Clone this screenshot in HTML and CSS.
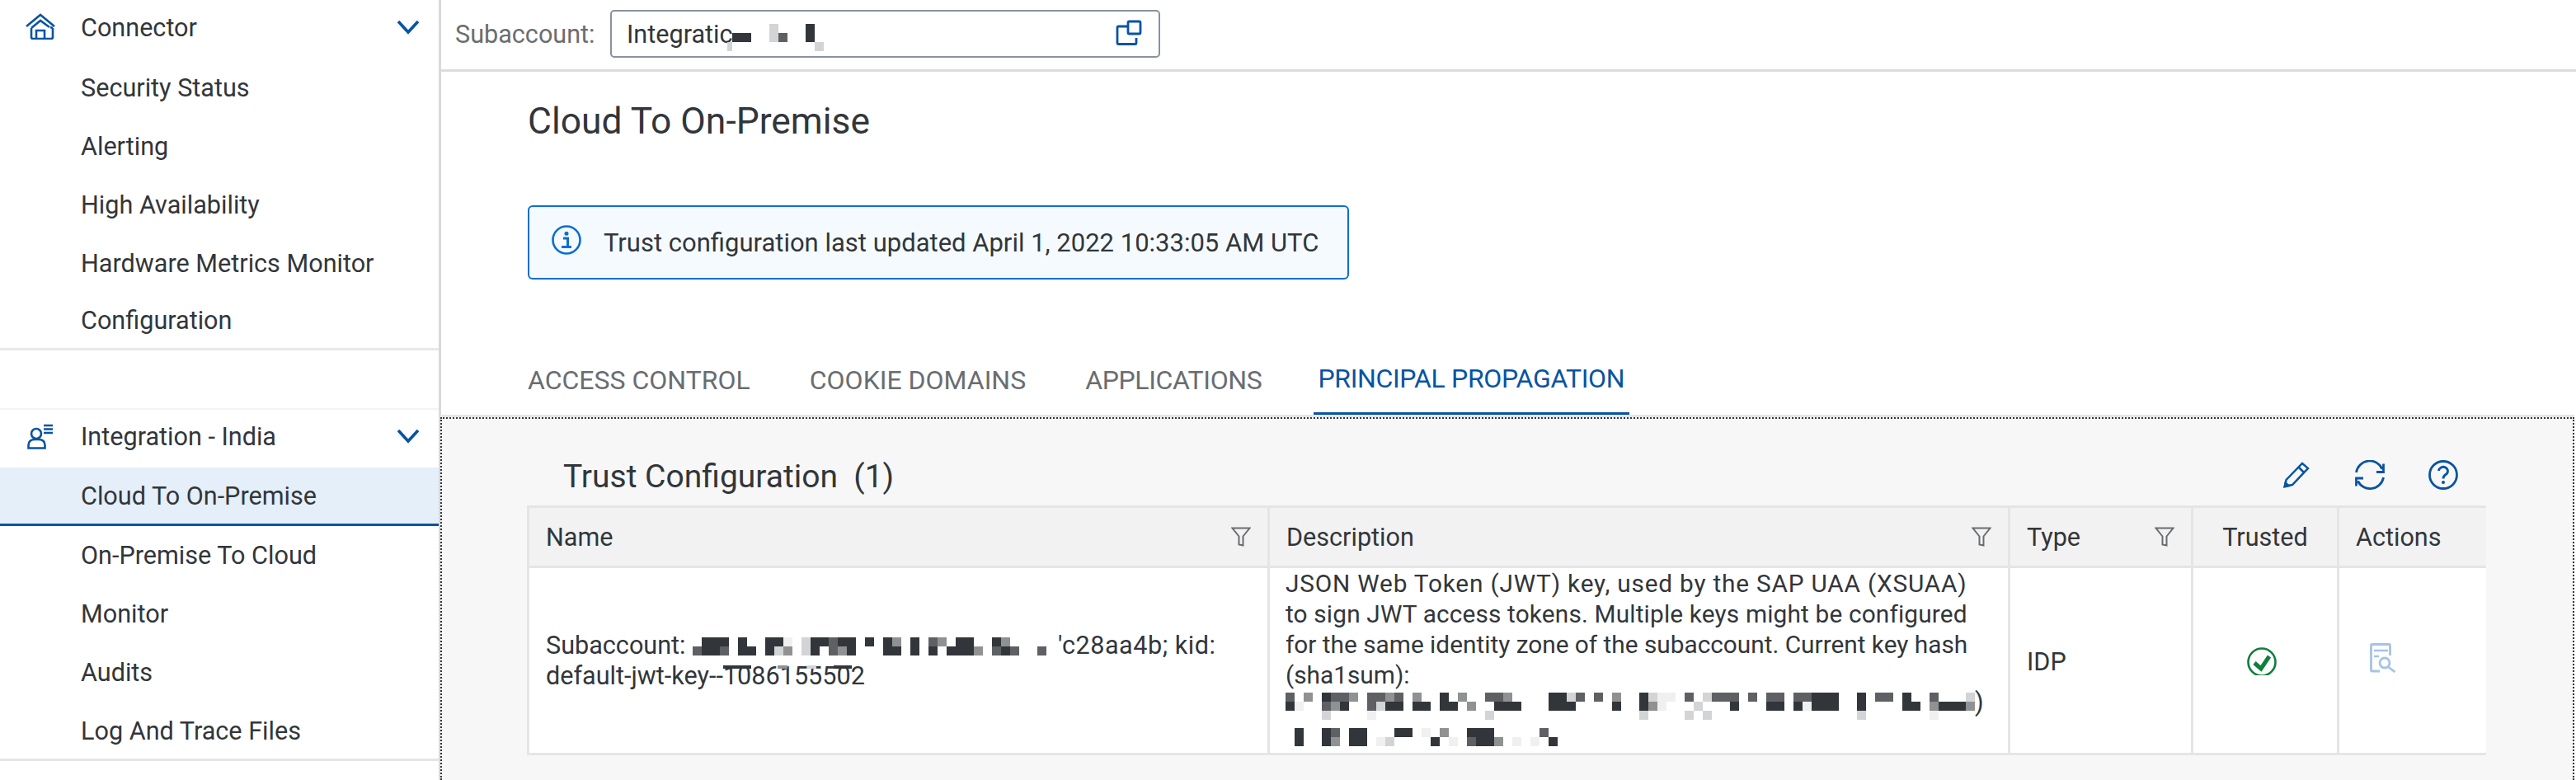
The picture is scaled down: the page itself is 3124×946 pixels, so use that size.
FILE: index.html
```html
<!DOCTYPE html>
<html lang="en">
<head>
<meta charset="utf-8">
<title>Cloud To On-Premise</title>
<link rel="stylesheet" href="styles.css">
</head>
<body>
<div class="app">
  <aside class="sidebar">
    <nav class="nav-group nav-group-first">
      <div class="nav-head">
        <svg class="nav-icon" viewBox="0 0 36 32"><path d="M1 16 18 2l17 14M7 18 18 9l11 8M7 18v11q0 2 2 2h22q2 0 2-2V18M30 17l3 1M13 31V21h10v10" fill="none" stroke="#0854a0" stroke-width="2.6"/></svg>
        <span class="nav-label">Connector</span>
        <svg class="chevron" viewBox="0 0 28 18"><path d="M2 2l12 13L26 2" fill="none" stroke="#0854a0" stroke-width="3.6"/></svg>
      </div>
      <a class="nav-item">Security Status</a>
      <a class="nav-item">Alerting</a>
      <a class="nav-item">High Availability</a>
      <a class="nav-item">Hardware Metrics Monitor</a>
      <a class="nav-item nav-item-last">Configuration</a>
    </nav>
    <nav class="nav-group nav-group-second">
      <div class="nav-head">
        <svg class="nav-icon" viewBox="0 0 36 32"><path d="M3.500 30.500h20V27q0-7-8-7h-4q-8 0-8 7z" fill="none" stroke="#0854a0" stroke-width="2.600"/><circle cx="13" cy="13" r="6" fill="none" stroke="#0854a0" stroke-width="2.600"/><path d="M22 3h11M22 7.500h11M22 12h11" fill="none" stroke="#0854a0" stroke-width="2.500"/></svg>
        <span class="nav-label">Integration - India</span>
        <svg class="chevron" viewBox="0 0 28 18"><path d="M2 2l12 13L26 2" fill="none" stroke="#0854a0" stroke-width="3.6"/></svg>
      </div>
      <a class="nav-item nav-item-selected">Cloud To On-Premise</a>
      <a class="nav-item">On-Premise To Cloud</a>
      <a class="nav-item">Monitor</a>
      <a class="nav-item">Audits</a>
      <a class="nav-item">Log And Trace Files</a>
    </nav>
  </aside>
  <main class="main">
    <header class="topbar">
      <span class="topbar-label">Subaccount:</span>
      <div class="selector">
        <span class="selector-text">Integratic</span>
        <svg class="mosaic-selector" viewBox="0 0 117 33"><rect y="22" width="6" height="11" class="l"/><rect x="6" y="11" width="23" height="11" class="d"/><rect x="51" width="11" height="22" class="l"/><rect x="62" y="11" width="11" height="11" class="m"/><rect x="95" width="11" height="22" class="d"/><rect x="106" y="22" width="11" height="11" class="l"/></svg>
        <svg class="copy-icon" viewBox="0 0 32 32"><path d="M14 8H3.500q-1.500 0-1.500 1.500V28q0 1.500 1.500 1.500h20q1.500 0 1.500-1.500v-6" fill="none" stroke="#0854a0" stroke-width="2.800"/><rect x="15" y="2" width="15" height="15" rx="1.500" fill="none" stroke="#0854a0" stroke-width="2.800"/></svg>
      </div>
    </header>
    <div class="content">
      <h1 class="title">Cloud To On-Premise</h1>
      <div class="strip">
        <svg class="strip-icon" viewBox="0 0 36 36"><circle cx="18" cy="18" r="16.500" fill="none" stroke="#0a6ed1" stroke-width="2.600"/><circle cx="18" cy="10.300" r="2.500" fill="#0a6ed1"/><path d="M14 16h5.500v10M12 26.500h12" fill="none" stroke="#0a6ed1" stroke-width="3"/></svg>
        <span class="strip-text">Trust configuration last updated April 1, 2022 10:33:05 AM UTC</span>
      </div>
      <div class="tabs">
        <span class="tab">ACCESS CONTROL</span>
        <span class="tab">COOKIE DOMAINS</span>
        <span class="tab tab-narrow tab-before-active">APPLICATIONS</span>
        <span class="tab tab-narrow tab-active">PRINCIPAL PROPAGATION</span>
      </div>
    </div>
    <section class="panel">
      <div class="toolbar">
        <h2 class="panel-title">Trust Configuration&nbsp; (1)</h2>
        <div class="tools">
          <svg class="tool tool-pencil" viewBox="0 0 32 32"><path d="M2 29.500 3.500 22 23 2l7 6-19 20zM18.500 6.500l7 7" fill="none" stroke="#0854a0" stroke-width="2.500"/><path d="M0 32l2-9 7 7z" fill="#0854a0"/></svg>
          <svg class="tool tool-refresh" viewBox="0 0 36 36"><path d="M1.500 15A16.500 16.500 0 0 1 33 11M34.500 21A16.500 16.500 0 0 1 3.500 25.500M34.500 4.500V14.500H26M1.500 31.500V22H10" fill="none" stroke="#0854a0" stroke-width="2.800"/></svg>
          <svg class="tool tool-help" viewBox="0 0 36 36"><circle cx="18" cy="18" r="16.500" fill="none" stroke="#0854a0" stroke-width="2.800"/><path d="M12.500 13a5.500 5 0 1 1 8.500 4.500q-3 2-3 5" fill="none" stroke="#0854a0" stroke-width="2.800"/><circle cx="18" cy="27" r="2" fill="#0854a0"/></svg>
        </div>
      </div>
      <div class="table">
        <div class="th">Name<svg class="filter" viewBox="0 0 24 24"><path d="M1.500 1.500h21l-8 10v11l-5-1v-10z" fill="none" stroke="#6a6d70" stroke-width="2"/></svg></div>
        <div class="th">Description<svg class="filter" viewBox="0 0 24 24"><path d="M1.500 1.500h21l-8 10v11l-5-1v-10z" fill="none" stroke="#6a6d70" stroke-width="2"/></svg></div>
        <div class="th">Type<svg class="filter" viewBox="0 0 24 24"><path d="M1.500 1.500h21l-8 10v11l-5-1v-10z" fill="none" stroke="#6a6d70" stroke-width="2"/></svg></div>
        <div class="th th-trusted">Trusted</div>
        <div class="th">Actions</div>

        <div class="td td-name">
          <span>Subaccount: <svg class="mosaic-name" viewBox="0 0 39 2"><rect x="1" width="3" height="1" class="d"/><rect x="5" width="1" height="1" class="d"/><rect x="8" width="2" height="1" class="d"/><rect x="10" width="1" height="1" class="x"/><rect x="12" width="1" height="1" class="l"/><rect x="13" width="2" height="1" class="d"/><rect x="15" width="1" height="1" class="m"/><rect x="16" width="2" height="1" class="d"/><rect x="19" width="1" height="1" class="d"/><rect x="21" width="1" height="1" class="d"/><rect x="22" width="1" height="1" class="g"/><rect x="24" width="1" height="1" class="d"/><rect x="26" width="1" height="1" class="m"/><rect x="27" width="1" height="1" class="g"/><rect x="29" width="2" height="1" class="d"/><rect x="33" width="1" height="1" class="d"/><rect x="34" width="1" height="1" class="g"/><rect y="1" width="1" height="1" class="m"/><rect x="1" y="1" width="2" height="1" class="d"/><rect x="3" y="1" width="1" height="1" class="m"/><rect x="5" y="1" width="2" height="1" class="d"/><rect x="8" y="1" width="1" height="1" class="d"/><rect x="9" y="1" width="1" height="1" class="l"/><rect x="10" y="1" width="1" height="1" class="g"/><rect x="12" y="1" width="1" height="1" class="l"/><rect x="13" y="1" width="1" height="1" class="d"/><rect x="15" y="1" width="1" height="1" class="m"/><rect x="16" y="1" width="1" height="1" class="g"/><rect x="17" y="1" width="1" height="1" class="d"/><rect x="21" y="1" width="2" height="1" class="d"/><rect x="24" y="1" width="1" height="1" class="d"/><rect x="26" y="1" width="1" height="1" class="d"/><rect x="28" y="1" width="3" height="1" class="d"/><rect x="31" y="1" width="1" height="1" class="g"/><rect x="33" y="1" width="1" height="1" class="m"/><rect x="34" y="1" width="1" height="1" class="d"/><rect x="35" y="1" width="1" height="1" class="m"/><rect x="38" y="1" width="1" height="1" class="m"/></svg><span class="name-tail">'c28aa4b; kid:</span><br>default-jwt-key--<span class="digits">1086155502<svg class="digits-marks" viewBox="0 0 160 4"><rect width="34" height="4" class="d"/><rect x="66" width="12" height="4" class="g"/><rect x="102" width="11" height="4" class="l"/><rect x="134" width="22" height="4" class="d"/></svg></span></span>
        </div>
        <div class="td td-desc">
          <p class="desc-text"><span class="desc-line-caps">JSON Web Token (JWT) key, used by the SAP UAA (XSUAA)</span><br><span class="desc-line-two">to sign JWT access tokens. Multiple keys might be configured</span><br>for the same identity zone of the subaccount. Current key hash<br>(sha1sum):</p>
          <div class="hash-line"><svg class="mosaic-hash" viewBox="0 0 76 3"><rect width="1" height="1" class="m"/><rect x="2" width="1" height="1" class="g"/><rect x="4" width="1" height="1" class="d"/><rect x="5" width="2" height="1" class="m"/><rect x="7" width="1" height="1" class="g"/><rect x="9" width="2" height="1" class="m"/><rect x="11" width="1" height="1" class="g"/><rect x="12" width="1" height="1" class="m"/><rect x="14" width="1" height="1" class="g"/><rect x="17" width="1" height="1" class="d"/><rect x="19" width="1" height="1" class="g"/><rect x="22" width="2" height="1" class="m"/><rect x="24" width="1" height="1" class="g"/><rect x="29" width="2" height="1" class="d"/><rect x="31" width="1" height="1" class="l"/><rect x="32" width="1" height="1" class="m"/><rect x="34" width="1" height="1" class="m"/><rect x="36" width="1" height="1" class="g"/><rect x="39" width="1" height="1" class="d"/><rect x="40" width="1" height="1" class="l"/><rect x="41" width="2" height="1" class="x"/><rect x="44" width="1" height="1" class="m"/><rect x="46" width="1" height="1" class="l"/><rect x="47" width="3" height="1" class="m"/><rect x="51" width="1" height="1" class="m"/><rect x="53" width="2" height="1" class="m"/><rect x="56" width="2" height="1" class="m"/><rect x="58" width="3" height="1" class="d"/><rect x="63" width="1" height="1" class="d"/><rect x="65" width="2" height="1" class="m"/><rect x="68" width="1" height="1" class="d"/><rect x="71" width="1" height="1" class="m"/><rect x="75" width="1" height="1" class="l"/><rect y="1" width="1" height="1" class="d"/><rect x="1" y="1" width="1" height="1" class="x"/><rect x="4" y="1" width="1" height="1" class="m"/><rect x="5" y="1" width="1" height="1" class="g"/><rect x="6" y="1" width="1" height="1" class="d"/><rect x="9" y="1" width="1" height="1" class="m"/><rect x="10" y="1" width="1" height="1" class="l"/><rect x="11" y="1" width="2" height="1" class="d"/><rect x="14" y="1" width="2" height="1" class="d"/><rect x="17" y="1" width="2" height="1" class="d"/><rect x="20" y="1" width="1" height="1" class="g"/><rect x="23" y="1" width="3" height="1" class="d"/><rect x="29" y="1" width="3" height="1" class="d"/><rect x="36" y="1" width="1" height="1" class="d"/><rect x="39" y="1" width="1" height="1" class="d"/><rect x="40" y="1" width="1" height="1" class="g"/><rect x="41" y="1" width="1" height="1" class="x"/><rect x="45" y="1" width="1" height="1" class="l"/><rect x="49" y="1" width="1" height="1" class="d"/><rect x="53" y="1" width="2" height="1" class="d"/><rect x="56" y="1" width="1" height="1" class="d"/><rect x="57" y="1" width="1" height="1" class="x"/><rect x="58" y="1" width="3" height="1" class="d"/><rect x="63" y="1" width="1" height="1" class="d"/><rect x="68" y="1" width="2" height="1" class="d"/><rect x="71" y="1" width="1" height="1" class="g"/><rect x="72" y="1" width="3" height="1" class="d"/><rect x="75" y="1" width="1" height="1" class="g"/><rect x="4" y="2" width="1" height="1" class="l"/><rect x="9" y="2" width="1" height="1" class="x"/><rect x="22" y="2" width="1" height="1" class="l"/><rect x="39" y="2" width="1" height="1" class="l"/><rect x="44" y="2" width="1" height="1" class="l"/><rect x="46" y="2" width="1" height="1" class="l"/><rect x="63" y="2" width="1" height="1" class="l"/><rect x="71" y="2" width="1" height="1" class="x"/></svg><span class="hash-paren">)</span></div>
          <svg class="mosaic-hash-two" viewBox="0 0 30 2"><rect x="1" width="1" height="1" class="d"/><rect x="4" width="1" height="1" class="d"/><rect x="5" width="1" height="1" class="m"/><rect x="7" width="2" height="1" class="d"/><rect x="12" width="2" height="1" class="d"/><rect x="15" width="1" height="1" class="x"/><rect x="17" width="1" height="1" class="g"/><rect x="20" width="3" height="1" class="d"/><rect x="28" width="1" height="1" class="m"/><rect x="1" y="1" width="1" height="1" class="d"/><rect x="4" y="1" width="1" height="1" class="d"/><rect x="5" y="1" width="1" height="1" class="g"/><rect x="7" y="1" width="2" height="1" class="d"/><rect x="10" y="1" width="1" height="1" class="x"/><rect x="11" y="1" width="1" height="1" class="l"/><rect x="16" y="1" width="1" height="1" class="d"/><rect x="18" y="1" width="1" height="1" class="x"/><rect x="20" y="1" width="1" height="1" class="m"/><rect x="21" y="1" width="2" height="1" class="d"/><rect x="23" y="1" width="1" height="1" class="g"/><rect x="25" y="1" width="1" height="1" class="x"/><rect x="27" y="1" width="1" height="1" class="x"/><rect x="29" y="1" width="1" height="1" class="d"/></svg>
        </div>
        <div class="td td-type">IDP</div>
        <div class="td td-trusted">
          <svg class="check-icon" viewBox="0 0 36 34"><circle cx="18" cy="18" r="16.500" fill="none" stroke="#107e3e" stroke-width="2.600"/><path d="M9 19l8 7 10-15" fill="none" stroke="#107e3e" stroke-width="5"/></svg>
        </div>
        <div class="td">
          <svg class="action-icon" viewBox="0 0 32 36"><path d="M12 34H3q-1.500 0-1.500-1.500V3q0-1.500 1.500-1.500h20q1.500 0 1.500 1.500v12" fill="none" stroke="#a6c3e4" stroke-width="2.800"/><path d="M5 9h17M5 16h6" fill="none" stroke="#a6c3e4" stroke-width="2.600"/><circle cx="18" cy="24" r="6" fill="none" stroke="#a6c3e4" stroke-width="2.800"/><path d="M22.500 29l8 6" fill="none" stroke="#a6c3e4" stroke-width="2.800"/></svg>
        </div>
      </div>
    </section>
  </main>
</div>
</body>
</html>
```
FILE: styles.css
```css
* { box-sizing: border-box; }
html, body { margin: 0; padding: 0; height: 946px; overflow: hidden; background: #fff; }
body { font-family: "Roboto", "Liberation Sans", sans-serif; font-size: 30.6px; color: #32363a; }
.d { fill: #32363a; } .m { fill: #5e6063; } .g { fill: #8f9193; } .l { fill: #d3d4d5; } .x { fill: #f0f0f0; }

.app { display: flex; height: 946px; }
.sidebar { width: 535px; flex: none; border-right: 3px solid #d9d9d9; overflow: hidden; }
.nav-group { display: flex; flex-direction: column; }
.nav-group-first { height: 425px; border-bottom: 3px solid #e8e8e8; }
.nav-group-second { margin-top: 70px; border-top: 2px solid #f4f4f4; border-bottom: 3px solid #e5e5e5; height: 428px; }
.nav-head { height: 66px; flex: none; display: flex; align-items: center; padding-left: 31px; position: relative; }
.nav-group-first .nav-head { height: 66px; margin-bottom: 5px; }
.nav-group-first .nav-icon { margin-bottom: 2px; }
.nav-group-second .nav-head { height: 70px; padding-bottom: 6px; }
.nav-icon { width: 36px; height: 32px; flex: none; margin-right: 31px; }
.nav-label { flex: 1; }
.chevron { width: 28px; height: 18px; margin-right: 23px; flex: none; }
.nav-item { height: 71px; flex: none; display: flex; align-items: center; padding-left: 98px; }
.nav-group-first .nav-item-last { height: 67px; }
.nav-item-selected { background: #e5eff9; border-bottom: 3px solid #0854a0; padding-bottom: 0; }

.main { flex: 1; min-width: 0; display: flex; flex-direction: column; }
.topbar { height: 87px; flex: none; display: flex; align-items: center; padding: 0 0 2px 17px; border-bottom: 3px solid #dcdcdc; }
.topbar-label { color: #6a6d70; width: 188px; }
.selector { width: 667px; height: 58px; border: 2px solid #89919a; border-radius: 5px; display: flex; align-items: center; padding-left: 18px; position: relative; background: #fff; }
.selector-text { flex: none; width: 122px; white-space: nowrap; }
.mosaic-selector { width: 117px; height: 33px; flex: none; margin-top: 8px; shape-rendering: crispEdges; }
.copy-icon { width: 32px; height: 32px; position: absolute; right: 20px; top: 10px; }

.content { height: 419px; flex: none; padding-left: 105px; display: flex; flex-direction: column; align-items: flex-start; }
.title { font-size: 44.4px; font-weight: 400; line-height: 50px; margin: 35px 0 0; }
.strip { width: 996px; height: 90px; margin-top: 77px; border: 2px solid #0a6ed1; border-radius: 6px; background: #f5faff; display: flex; align-items: center; padding-left: 27px; white-space: nowrap; }
.strip-icon { width: 36px; height: 36px; margin: 0 27px 7px 0; flex: none; }
.strip-text { font-size: 31px; }
.tabs { display: flex; margin-top: 91px; height: 73px; margin-left: -6px; }
.tab { color: #6a6d70; font-size: 32px; height: 73px; padding: 0 6px; margin-right: 60px; display: flex; align-items: center; padding-bottom: 12px; white-space: nowrap; }
.tab-narrow { letter-spacing: -0.35px; }
.tab-before-active { margin-right: 56px; }
.tab-active { color: #0854a0; border-bottom: 3px solid #0854a0; margin-right: 0; }

.panel { flex: 1; min-height: 0; margin-right: 2px; margin-left: -1px; background: #f7f7f7; border-top: 2px dotted #32363a; border-left: 2px dotted #32363a; border-right: 2px dotted #32363a; padding-left: 103px; box-shadow: 0 -3px 0 #e5e5e5; overflow: hidden; }
.toolbar { height: 105px; display: flex; align-items: flex-end; justify-content: space-between; padding-left: 44px; width: 2376px; }
.panel-title { margin: 0 0 10px; font-size: 39px; font-weight: 400; line-height: 50px; }
.tools { display: flex; align-items: center; margin: 0 34px 19px 0; }
.tool { flex: none; }
.tool-pencil { width: 32px; height: 32px; margin-right: 55px; }
.tool-refresh { width: 36px; height: 36px; margin-right: 53px; }
.tool-help { width: 36px; height: 36px; }

.table { display: grid; grid-template-columns: 898px 898px 222px 177px 181px; grid-template-rows: 76px 224px; width: 2376px; border-right: 3px solid #e5e5e5; border-bottom: 3px solid #e5e5e5; }
.th { background: #f2f2f2; border-left: 3px solid #e5e5e5; border-top: 3px solid #e5e5e5; border-bottom: 3px solid #e5e5e5; display: flex; align-items: center; justify-content: space-between; padding: 0 20px 0 20px; }
.th-trusted { justify-content: center; padding: 0; }
.filter { width: 24px; height: 24px; flex: none; }
.td { background: #fff; border-left: 3px solid #e5e5e5; display: flex; align-items: center; padding: 0 20px; overflow: hidden; line-height: 37px; }
.td-name { white-space: nowrap; }
.td-type { padding-top: 2px; }
.mosaic-name { width: 429px; height: 22px; display: inline-block; vertical-align: -2px; margin: 0 14px 0 1px; shape-rendering: crispEdges; }
.name-tail { letter-spacing: 0.5px; }
.digits { position: relative; }
.digits-marks { position: absolute; left: 0; top: 5px; width: 160px; height: 4px; shape-rendering: crispEdges; }
.td-desc { display: block; padding: 0 0 0 19px; }
.desc-text { margin: 0; white-space: nowrap; font-size: 29.8px; }
.desc-line-caps { letter-spacing: 0.8px; }
.desc-line-two { letter-spacing: 0.16px; }
.hash-line { display: flex; align-items: center; height: 33px; margin-top: 3px; }
.mosaic-hash { width: 836px; height: 33px; flex: none; shape-rendering: crispEdges; }
.hash-paren { margin-top: -10px; }
.mosaic-hash-two { display: block; width: 330px; height: 22px; margin-top: 10px; shape-rendering: crispEdges; }
.td-trusted { justify-content: center; }
.check-icon { width: 36px; height: 34px; margin-right: 8px; margin-top: 1px; flex: none; }
.action-icon { width: 32px; height: 36px; margin-left: 17px; margin-top: -6px; flex: none; }
```
